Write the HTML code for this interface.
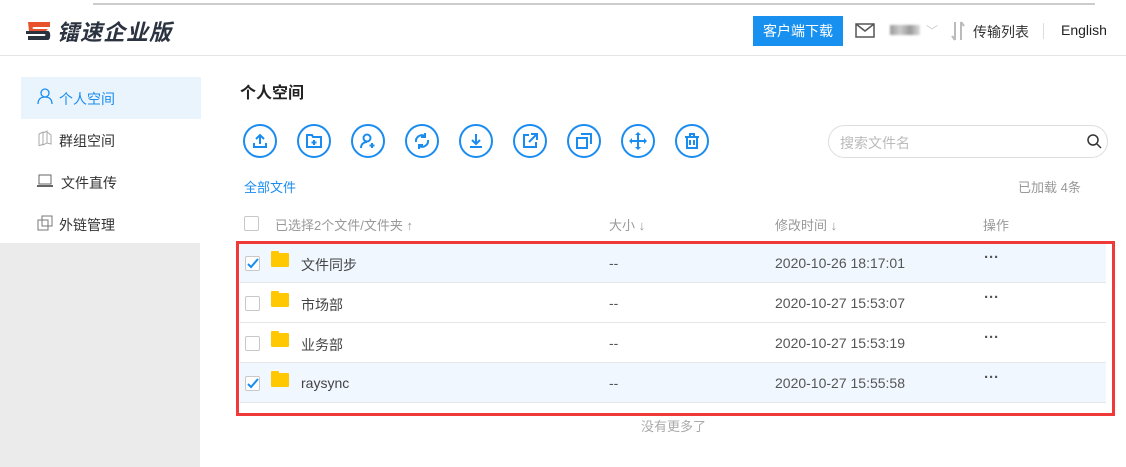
<!DOCTYPE html>
<html><head><meta charset="utf-8"><style>
*{margin:0;padding:0;box-sizing:border-box}
body{width:1126px;height:467px;overflow:hidden;background:#fff;font-family:"Liberation Sans","Noto Sans CJK SC",sans-serif;font-size:14px;color:#333;position:relative}
.a{position:absolute;white-space:nowrap}
.circ{position:absolute;top:124px;width:34px;height:34px;border:2px solid #1a8cf0;border-radius:50%}
.circ svg{position:absolute;left:6px;top:6px}
.row{position:absolute;left:240px;width:866px;height:40px;border-bottom:1px solid #e4e6ea}
.cb{position:absolute;left:5px;top:13px;width:15px;height:15px;border:1px solid #c8c8c8;border-radius:2px;background:#fff}
.fold{position:absolute;left:31px;top:10px;width:18px;height:14px;background:#ffc800;border-radius:1px}
.fold:before{content:"";position:absolute;left:0;top:-2px;width:8px;height:3px;background:#ffc800;border-radius:1px 1px 0 0}
.row .n{position:absolute;left:61px;top:12px;font-size:14px;color:#444}
.row .s{position:absolute;left:369px;top:12px;color:#555}
.row .t{position:absolute;left:535px;top:12px;color:#555;font-size:14px}
.row .d{position:absolute;left:744px;top:6px;color:#555;font-size:15px;font-weight:bold;letter-spacing:0px}
</style></head><body>
<div class="a" style="left:93px;top:3px;width:1002px;height:2px;background:#ccc"></div>
<svg class="a" style="left:24px;top:19px" width="28" height="24" viewBox="0 0 28 24"><path d="M4 3h22v5H10c-2 0-2 2 0 2h14l-4 4H5c-2 0-2-2 0-2" fill="#e8522a"/><path d="M2 12h22c3 0 3 9 0 9H4v-4h16c2 0 2-2 0-2H2z" fill="#2b3340"/></svg>
<div class="a" style="left:57px;top:15px;font-size:22px;font-weight:bold;font-style:italic;color:#2b3340;letter-spacing:1px">镭速企业版</div>
<div class="a" style="left:753px;top:16px;width:90px;height:30px;background:#1890f0;color:#fff;font-size:14px;line-height:30px;text-align:center">客户端下载</div>
<svg class="a" style="left:855px;top:23px" width="20" height="15"><rect x="1" y="1" width="18" height="13" fill="none" stroke="#555" stroke-width="1.5"/><path d="M1 1l9 7 9-7" fill="none" stroke="#555" stroke-width="1.5"/></svg>
<div class="a" style="left:890px;top:25px;width:30px;height:10px;background:linear-gradient(90deg,#999,#ccc,#999,#ddd);filter:blur(1px)"></div>
<div class="a" style="left:926px;top:22px;color:#ccc;font-size:12px">﹀</div>
<svg class="a" style="left:950px;top:21px" width="16" height="20"><path d="M5 1v18M11 19V1M5 19l-3-4M11 1l3 4" stroke="#bbb" stroke-width="2" fill="none"/></svg>
<div class="a" style="left:973px;top:22px;font-size:14px;color:#333">传输列表</div>
<div class="a" style="left:1043px;top:23px;width:1px;height:16px;background:#ddd"></div>
<div class="a" style="left:1061px;top:22px;font-size:14px;color:#222">English</div>
<div class="a" style="left:0;top:55px;width:1126px;height:1px;background:#e5e5e5"></div>
<div class="a" style="left:0;top:243px;width:200px;height:224px;background:#ebebeb"></div>
<div class="a" style="left:21px;top:77px;width:180px;height:42px;background:#e9f4fd"></div>
<svg class="a" style="left:37px;top:88px" width="16" height="16"><circle cx="8" cy="5" r="4" fill="none" stroke="#1a8cf0" stroke-width="1.3"/><path d="M1 16c0-5 3-7 7-7s7 2 7 7" fill="none" stroke="#1a8cf0" stroke-width="1.3"/></svg>
<div class="a" style="left:59px;top:89px;color:#1a8cf0">个人空间</div>
<svg class="a" style="left:37px;top:130px" width="16" height="16"><path d="M2 4l4-2v12l-4 2zM6 3l4-2v12l-4 2zM10 2l4 3v9l-4-1" fill="none" stroke="#aaa"/></svg>
<div class="a" style="left:59px;top:131px">群组空间</div>
<svg class="a" style="left:37px;top:174px" width="16" height="14"><rect x="2" y="1" width="12" height="9" fill="none" stroke="#666"/><path d="M0 12h16" stroke="#666" stroke-width="2"/></svg>
<div class="a" style="left:61px;top:173px">文件直传</div>
<svg class="a" style="left:37px;top:215px" width="16" height="16"><rect x="1" y="5" width="10" height="10" fill="none" stroke="#777"/><rect x="5" y="1" width="10" height="10" fill="none" stroke="#777"/></svg>
<div class="a" style="left:59px;top:215px">外链管理</div>
<div class="a" style="left:240px;top:79px;font-size:16px;font-weight:bold;color:#222">个人空间</div>
<div class="circ" style="left:243px"><svg width="18" height="18" viewBox="0 0 18 18" fill="none" stroke="#1a8cf0" stroke-width="2"><path d="M9 12V3M5 7l4-4 4 4M3 11v4h12v-4"/></svg></div>
<div class="circ" style="left:297px"><svg width="18" height="18" viewBox="0 0 18 18" fill="none" stroke="#1a8cf0" stroke-width="2"><path d="M2 3h5l1 2h8v10H2z"/><path d="M9 8v5M6.5 10.5h5"/></svg></div>
<div class="circ" style="left:351px"><svg width="18" height="18" viewBox="0 0 18 18" fill="none" stroke="#1a8cf0" stroke-width="2"><circle cx="8" cy="6" r="3.5"/><path d="M2 16c0-4 3-6 6-6M13 11v5M10.5 13.5h5"/></svg></div>
<div class="circ" style="left:405px"><svg width="18" height="18" viewBox="0 0 18 18" fill="none" stroke="#1a8cf0" stroke-width="2"><path d="M3 10a6 6 0 0 1 9-6M15 8a6 6 0 0 1-9 6M12 1v4h-4M6 17v-4h4"/></svg></div>
<div class="circ" style="left:459px"><svg width="18" height="18" viewBox="0 0 18 18" fill="none" stroke="#1a8cf0" stroke-width="2"><path d="M9 2v10M5 8l4 4 4-4M3 15h12"/></svg></div>
<div class="circ" style="left:513px"><svg width="18" height="18" viewBox="0 0 18 18" fill="none" stroke="#1a8cf0" stroke-width="2"><path d="M8 3H3v12h12v-5M10 2h6v6M16 2l-8 8"/></svg></div>
<div class="circ" style="left:567px"><svg width="18" height="18" viewBox="0 0 18 18" fill="none" stroke="#1a8cf0" stroke-width="2"><rect x="2" y="6" width="10" height="10"/><path d="M6 2h10v10"/></svg></div>
<div class="circ" style="left:621px"><svg width="18" height="18" viewBox="0 0 18 18" fill="#1a8cf0" stroke="#1a8cf0" stroke-width="2"><path d="M9 2v14M2 9h14" fill="none"/><path d="M9 0l3 3H6zM9 18l3-3H6zM0 9l3-3v6zM18 9l-3-3v6z" stroke="none"/></svg></div>
<div class="circ" style="left:675px"><svg width="18" height="18" viewBox="0 0 18 18" fill="none" stroke="#1a8cf0" stroke-width="2"><path d="M2 5h14M7 5V2h4v3M4 5v11h10V5M7 8v5M11 8v5"/></svg></div>
<div class="a" style="left:828px;top:125px;width:280px;height:33px;border:1px solid #ddd;border-radius:17px"></div>
<div class="a" style="left:840px;top:133px;color:#bbb">搜索文件名</div>
<svg class="a" style="left:1086px;top:133px" width="16" height="16"><circle cx="7" cy="7" r="5" fill="none" stroke="#333" stroke-width="1.5"/><path d="M11 11l4 4" stroke="#333" stroke-width="1.5"/></svg>
<div class="a" style="left:244px;top:177px;font-size:13px;color:#1a8cf0">全部文件</div>
<div class="a" style="left:1018px;top:177px;font-size:13px;color:#999">已加载 4条</div>
<div class="a" style="left:244px;top:216px;width:15px;height:15px;border:1px solid #c8c8c8;border-radius:2px"></div>
<div class="a" style="left:275px;top:215px;font-size:13px;color:#999">已选择2个文件/文件夹 ↑</div>
<div class="a" style="left:609px;top:215px;font-size:13px;color:#999">大小 ↓</div>
<div class="a" style="left:775px;top:215px;font-size:13px;color:#999">修改时间 ↓</div>
<div class="a" style="left:983px;top:215px;font-size:13px;color:#999">操作</div>
<div class="row" style="top:243px;background:#f0f7ff"><div class="cb"><svg width="13" height="13" style="position:absolute;left:0;top:0"><path d="M2 7l3 3 7-8" fill="none" stroke="#1a8cf0" stroke-width="2"/></svg></div><div class="fold"></div><div class="n">文件同步</div><div class="s">--</div><div class="t">2020-10-26 18:17:01</div><div class="d">···</div></div>
<div class="row" style="top:283px"><div class="cb"></div><div class="fold"></div><div class="n">市场部</div><div class="s">--</div><div class="t">2020-10-27 15:53:07</div><div class="d">···</div></div>
<div class="row" style="top:323px"><div class="cb"></div><div class="fold"></div><div class="n">业务部</div><div class="s">--</div><div class="t">2020-10-27 15:53:19</div><div class="d">···</div></div>
<div class="row" style="top:363px;background:#f0f7ff"><div class="cb"><svg width="13" height="13" style="position:absolute;left:0;top:0"><path d="M2 7l3 3 7-8" fill="none" stroke="#1a8cf0" stroke-width="2"/></svg></div><div class="fold"></div><div class="n">raysync</div><div class="s">--</div><div class="t">2020-10-27 15:55:58</div><div class="d">···</div></div>
<div class="a" style="left:236px;top:241px;width:879px;height:175px;border:3px solid #f03a3a"></div>
<div class="a" style="left:641px;top:416px;font-size:13px;color:#aaa">没有更多了</div>
</body></html>
